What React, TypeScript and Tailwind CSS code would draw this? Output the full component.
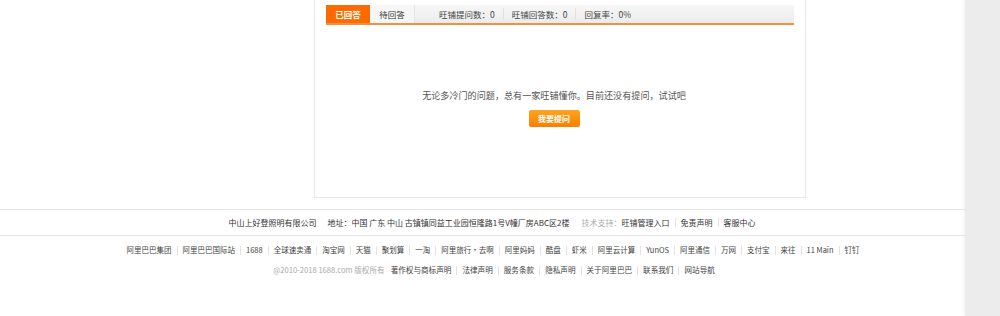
import React from "react";

const FONT = { fontFamily: '"Noto Sans CJK SC", "Liberation Sans", sans-serif' };

function Sep() {
  return <span className="inline-block w-px h-[9px] bg-[#e2e2e2] mx-[5px] align-middle" />;
}

const row2 = [
  "阿里巴巴集团",
  "阿里巴巴国际站",
  "1688",
  "全球速卖通",
  "淘宝网",
  "天猫",
  "聚划算",
  "一淘",
  "阿里旅行·去啊",
  "阿里妈妈",
  "酷盘",
  "虾米",
  "阿里云计算",
  "YunOS",
  "阿里通信",
  "万网",
  "支付宝",
  "来往",
  "11 Main",
  "钉钉",
];

const row3 = ["著作权与商标声明", "法律声明", "服务条款", "隐私声明", "关于阿里巴巴", "联系我们", "网站导航"];

export default function App() {
  return (
    <div className="relative w-[1000px] h-[316px] bg-white overflow-hidden text-[#333]" style={FONT}>
      <div className="pl-[314px]">
        <div className="w-[492px] h-[198px] border border-t-0 border-[#e8e8e8] px-[11px] pt-[5px]">
          <div className="flex h-[20px] border-b-2 border-[#f0923f] bg-gradient-to-b from-[#f7f7f7] to-[#ececec] text-[8.5px] leading-none">
            <div className="w-[44px] flex items-center justify-center bg-[#ff6a00] text-white font-bold">已回答</div>
            <div className="w-[45px] flex items-center justify-center bg-[#f6f6f6] border-r border-[#e4e4e4] text-[#333]">待回答</div>
            <div className="flex items-center pl-[24px] text-[#444]">
              <span>旺铺提问数：0</span>
              <span className="w-px h-[12px] bg-[#e0e0e0] mx-[8px]" />
              <span>旺铺回答数：0</span>
              <span className="w-px h-[12px] bg-[#e0e0e0] mx-[8px]" />
              <span>回复率：0%</span>
            </div>
          </div>
          <div className="flex flex-col items-center pt-[66px] pr-[12px]">
            <p className="text-[9.1px] leading-none text-[#555]">无论多冷门的问题，总有一家旺铺懂你。目前还没有提问，试试吧</p>
            <button className="mt-[10px] w-[51px] h-[17px] rounded-[2px] bg-gradient-to-b from-[#ffa41c] to-[#f77f00] text-white text-[8px] font-bold leading-none flex items-center justify-center">
              我要提问
            </button>
          </div>
        </div>
      </div>

      <div className="mt-[11px] border-t border-b border-[#e6e6e6] h-[27px] flex items-center justify-center text-[8px] leading-none">
        <div className="flex items-center pr-[16px]">
          <span className="text-[#333]">中山上好登照明有限公司</span>
          <span className="ml-[11px] text-[#333]">地址：</span>
          <span className="text-[#333]">中国 广东 中山 古镇镇同益工业园恒隆路1号V幢厂房ABC区2楼</span>
          <span className="ml-[12px] text-[#aaa]">技术支持：</span>
          <span className="text-[#333]">旺铺管理入口</span>
          <Sep />
          <span>免责声明</span>
          <Sep />
          <span>客服中心</span>
        </div>
      </div>

      <div className="flex justify-center pt-[10px] text-[7.5px] leading-none pr-[14px]">
        {row2.map((t, i) => (
          <React.Fragment key={t}>
            {i > 0 && <Sep />}
            <span className="text-[#444]">{t}</span>
          </React.Fragment>
        ))}
      </div>
      <div className="flex justify-center pt-[11px] text-[7.6px] leading-none pr-[12px]">
        <span className="text-[#aaa] mr-[6px]">@2010-2018 1688.com 版权所有</span>
        {row3.map((t, i) => (
          <React.Fragment key={t}>
            {i > 0 && <Sep />}
            <span className="text-[#444]">{t}</span>
          </React.Fragment>
        ))}
      </div>

      <div className="absolute right-0 top-0 w-[35px] h-full bg-[#ececec] shadow-[-2px_0_3px_rgba(0,0,0,0.04)]" />
    </div>
  );
}
